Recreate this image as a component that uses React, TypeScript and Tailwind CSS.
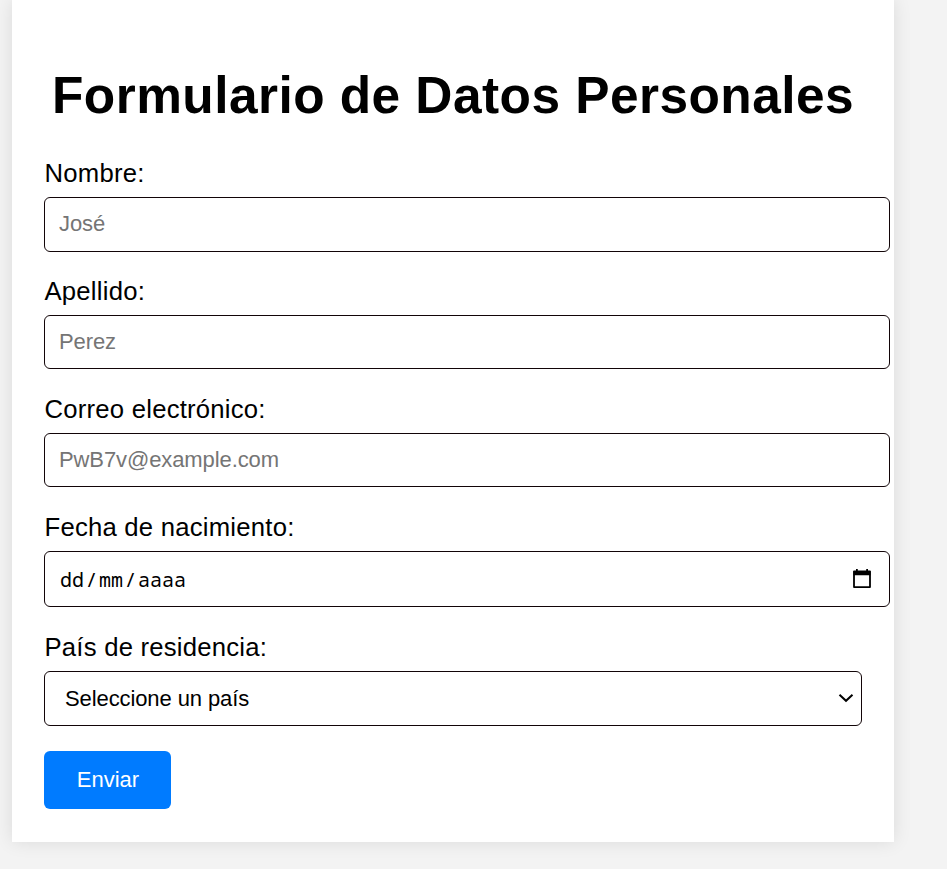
const box = 'block rounded-[6px] border border-[#120508] bg-white';
const text = 'w-[846px] pl-[14px] text-[22px] tracking-[-0.1px] text-black placeholder:text-[#757575] placeholder:opacity-100 outline-none';
const label = 'block h-[39px] whitespace-nowrap pl-[0.5px] text-[25.7px] leading-[30px] tracking-[0.22px]';

export default function App() {
  return (
    <div className="h-[869px] overflow-hidden bg-[#f3f3f3] pl-3 font-['Liberation_Sans',Arial,sans-serif] text-black">
      <main className="h-[842px] w-[882px] bg-white px-8 pt-[66px] shadow-[0_0_17px_rgba(0,0,0,0.1)]">
        <h1 className="h-[92px] whitespace-nowrap text-center text-[51.4px] leading-[59px] font-bold tracking-[0.46px]">
          Formulario de Datos Personales
        </h1>
        <form onSubmit={(e) => e.preventDefault()}>
          <div className="h-[118px]">
            <label htmlFor="nombre" className={label}>Nombre:</label>
            <input id="nombre" type="text" placeholder="José" className={`${box} ${text} h-[55px] pb-[2px]`} />
          </div>
          <div className="h-[118px]">
            <label htmlFor="apellido" className={label}>Apellido:</label>
            <input id="apellido" type="text" placeholder="Perez" className={`${box} ${text} h-[54px]`} />
          </div>
          <div className="h-[118px]">
            <label htmlFor="correo" className={label}>Correo electrónico:</label>
            <input id="correo" type="email" placeholder="PwB7v@example.com" className={`${box} ${text} h-[54px]`} />
          </div>
          <div className="h-[120px]">
            <span className={label}>Fecha de nacimiento:</span>
            <div className="flex h-[56px] w-[846px] items-center justify-between rounded-[6px] border border-[#120508] pr-[17px] pl-[15px]">
              <div className="flex gap-[1.5px] pt-[2px] font-['Noto_Sans_Mono','DejaVu_Sans_Mono',monospace] text-[20px] leading-none">
                <span>dd</span>
                <span>/</span>
                <span>mm</span>
                <span>/</span>
                <span>aaaa</span>
              </div>
              <svg className="mb-[2px]" width="20" height="21" viewBox="0 0 20 21" fill="none">
                <path d="M2 3.5H18V19.1H2Z" stroke="black" strokeWidth="1.8" strokeLinejoin="round" />
                <path d="M1.5 3H18.5V7.3H1.5ZM4 1H5.8V4H4ZM14.2 1H16V4H14.2Z" fill="black" />
              </svg>
            </div>
          </div>
          <div className="h-[119px]">
            <label htmlFor="pais" className={label}>País de residencia:</label>
            <div className="grid w-[818px] items-center">
              <select
                id="pais"
                className={`${box} col-start-1 row-start-1 h-[55px] w-full appearance-none pl-[20px] text-[22px] tracking-[-0.1px] outline-none`}
              >
                <option>Seleccione un país</option>
              </select>
              <svg
                className="pointer-events-none col-start-1 row-start-1 mr-[8px] mb-[2px] justify-self-end"
                width="16"
                height="10"
                viewBox="0 0 16 10"
                fill="none"
              >
                <path d="M1.5 1.7L8 7.8L14.5 1.7" stroke="black" strokeWidth="2" />
              </svg>
            </div>
          </div>
          <button type="submit" className="block h-[58px] w-[127px] rounded-[6px] bg-[#007bff] pb-[2px] pl-[1px] text-[22px] text-white">
            Enviar
          </button>
        </form>
      </main>
    </div>
  );
}
